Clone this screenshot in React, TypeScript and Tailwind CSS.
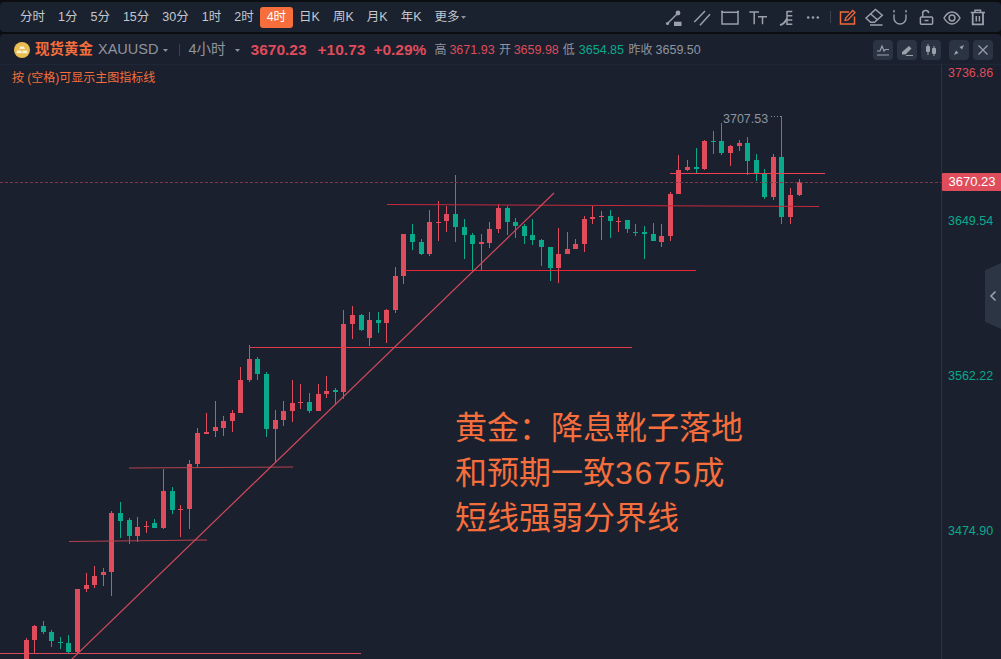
import React from "react";

const FONT = '"Liberation Sans", "Noto Sans CJK SC", sans-serif';
const RED = "#df4c5b";
const GREEN = "#0ba98c";

// x, high, bodyTop, bodyBottom, low, up?
type Candle = [number, number, number, number, number, 0 | 1];
const candles: Candle[] = [
  [26, 638, 640, 665, 665, 1],
  [34, 625, 626, 640, 653, 1],
  [43, 621, 626, 632, 634, 0],
  [51, 630, 632, 641, 647, 0],
  [60, 637, 642, 643, 649, 0],
  [68, 635, 643, 652, 653, 0],
  [77, 589, 589, 652, 654, 1],
  [86, 573, 585, 589, 592, 1],
  [94, 566, 576, 585, 588, 1],
  [103, 568, 572, 575, 586, 1],
  [111, 511, 513, 572, 596, 1],
  [120, 502, 513, 521, 538, 0],
  [129, 518, 520, 536, 544, 0],
  [137, 517, 527, 536, 542, 1],
  [146, 521, 526, 527, 533, 1],
  [154, 519, 523, 528, 528, 0],
  [163, 469, 491, 528, 529, 1],
  [172, 487, 491, 510, 514, 0],
  [180, 505, 509, 510, 537, 1],
  [189, 460, 464, 509, 529, 1],
  [197, 428, 433, 464, 467, 1],
  [206, 413, 432, 434, 434, 1],
  [215, 401, 427, 431, 437, 1],
  [223, 416, 421, 428, 436, 1],
  [232, 410, 413, 421, 432, 1],
  [240, 367, 380, 413, 413, 1],
  [249, 345, 359, 380, 382, 1],
  [257, 357, 359, 374, 380, 0],
  [266, 372, 374, 429, 437, 0],
  [275, 410, 420, 429, 463, 1],
  [283, 401, 411, 420, 426, 1],
  [292, 380, 403, 411, 422, 1],
  [300, 384, 402, 403, 409, 1],
  [309, 393, 402, 411, 413, 0],
  [318, 384, 394, 411, 411, 1],
  [326, 376, 391, 394, 398, 1],
  [335, 388, 390, 392, 405, 0],
  [343, 310, 324, 392, 399, 1],
  [352, 306, 315, 324, 339, 1],
  [361, 314, 315, 330, 331, 0],
  [369, 312, 320, 338, 346, 1],
  [378, 312, 320, 323, 333, 0],
  [386, 309, 310, 323, 343, 1],
  [395, 267, 276, 310, 313, 1],
  [403, 234, 234, 276, 284, 1],
  [412, 224, 234, 242, 250, 0],
  [421, 239, 242, 254, 255, 0],
  [429, 210, 222, 254, 256, 1],
  [438, 201, 222, 223, 241, 1],
  [446, 206, 214, 221, 232, 1],
  [455, 175, 214, 227, 242, 0],
  [464, 219, 227, 235, 259, 0],
  [472, 233, 235, 244, 272, 0],
  [481, 234, 242, 244, 270, 1],
  [489, 222, 229, 243, 248, 1],
  [498, 204, 208, 229, 233, 1],
  [507, 206, 208, 222, 235, 0],
  [515, 218, 222, 226, 238, 0],
  [524, 224, 226, 236, 244, 0],
  [532, 219, 235, 240, 245, 0],
  [541, 239, 240, 247, 266, 0],
  [550, 247, 247, 268, 281, 0],
  [558, 228, 254, 268, 283, 1],
  [567, 232, 249, 254, 254, 1],
  [575, 239, 244, 249, 249, 1],
  [584, 216, 219, 244, 252, 1],
  [592, 206, 217, 219, 224, 1],
  [601, 211, 216, 217, 240, 1],
  [610, 210, 216, 221, 238, 0],
  [618, 217, 221, 222, 232, 1],
  [627, 220, 220, 229, 233, 0],
  [635, 224, 232, 233, 236, 0],
  [644, 226, 232, 234, 259, 0],
  [653, 223, 234, 241, 241, 0],
  [661, 224, 236, 242, 247, 1],
  [670, 192, 194, 236, 241, 1],
  [678, 155, 170, 194, 194, 1],
  [687, 160, 167, 170, 171, 1],
  [696, 148, 167, 169, 174, 0],
  [704, 140, 141, 169, 170, 1],
  [713, 131, 141, 142, 154, 0],
  [721, 123, 141, 153, 155, 0],
  [730, 145, 146, 153, 166, 1],
  [739, 140, 143, 146, 151, 1],
  [747, 137, 143, 161, 175, 0],
  [756, 154, 160, 173, 181, 0],
  [764, 169, 173, 197, 199, 0],
  [773, 154, 157, 197, 200, 1],
  [781, 116, 157, 217, 224, 0],
  [790, 188, 195, 217, 224, 1],
  [799, 179, 182, 195, 196, 1],
];

// hand drawn support and resistance lines
const levels = [
  { x1: 0, y1: 653.5, x2: 361, y2: 653.5, c: "#d9475a" },
  { x1: 69, y1: 541.5, x2: 207, y2: 540, c: "#b8414f" },
  { x1: 129, y1: 468, x2: 293, y2: 467, c: "#b8414f" },
  { x1: 249, y1: 347.5, x2: 632, y2: 347.5, c: "#e03a4a" },
  { x1: 387, y1: 204.5, x2: 819, y2: 206.5, c: "#c42a3c" },
  { x1: 405, y1: 270.5, x2: 696, y2: 270.5, c: "#ea2535" },
  { x1: 670, y1: 173.5, x2: 825, y2: 173.5, c: "#ee4252" },
];

const tools = ["分时", "1分", "5分", "15分", "30分", "1时", "2时", "4时", "日K", "周K", "月K", "年K"];

function Caret({ className = "" }: { className?: string }) {
  return (
    <svg width="5" height="3" viewBox="0 0 5 3" className={className}>
      <path d="M0 0h5L2.5 3z" fill="#8a919c" />
    </svg>
  );
}

// toolbar drawing icons, all on a 20 x 20 grid
function ToolIcon({ children, color = "#9aa1ab" }: { children: React.ReactNode; color?: string }) {
  return (
    <svg width="20" height="20" viewBox="0 0 20 20" fill="none" stroke={color} strokeWidth="1.5">
      {children}
    </svg>
  );
}

function SmallBtn({ children }: { children: React.ReactNode }) {
  return (
    <div className="flex h-5 w-5 items-center justify-center rounded-[4px] bg-[#2b3442]">
      {children}
    </div>
  );
}

function TopBar() {
  return (
    <div className="flex h-[30px] items-center rounded-[4px] bg-[#1a212f] pl-[13.5px]">
      {tools.map((t) => (
        <button
          key={t}
          type="button"
          className={`h-[21px] rounded-[3px] px-[6.5px] text-[12.5px] leading-[21px] ${
            t === "4时" ? "bg-[#f56e3c] text-white" : "text-[#c4c8ce]"
          }`}
        >
          {t}
        </button>
      ))}
      <button type="button" className="flex items-center gap-[2px] pl-[6.5px] text-[12.5px] text-[#c4c8ce]">
        更多
        <Caret />
      </button>

      <div className="ml-auto flex items-center pr-[13px]">
        <div className="flex items-center gap-[8px]">
          <ToolIcon>
            <path d="M3 17 13 7" />
            <circle cx="14" cy="6" r="2.4" fill="#9aa1ab" stroke="none" />
            <circle cx="3.5" cy="16.5" r="1.6" fill="#9aa1ab" stroke="none" />
            <rect x="10" y="14.7" width="7.5" height="4.3" fill="#9aa1ab" stroke="none" />
          </ToolIcon>
          <ToolIcon>
            <path d="M2.3 15 13 4M8 18.3 18 7.3" />
          </ToolIcon>
          <ToolIcon>
            <rect x="2" y="5.3" width="16" height="11.7" />
            <path d="M1 4.5h2M17 4.5h2" />
          </ToolIcon>
          <ToolIcon>
            <path d="M1.3 5H11M6.2 5v12.3M10 9.7h9M14.5 9.7v7.6" />
          </ToolIcon>
          <ToolIcon>
            <path d="M11 4.5h5.3M11 8.7h5.3M11 12.9h5.3M11 17.2h5.3M11 4v14" />
            <path d="M4 18c3.5-.5 5.5-3.5 7-6.500" strokeWidth="1.8" />
          </ToolIcon>
          <ToolIcon>
            <circle cx="4.2" cy="10.5" r="1.3" fill="#9aa1ab" stroke="none" />
            <circle cx="9" cy="10.5" r="1.3" fill="#9aa1ab" stroke="none" />
            <circle cx="13.8" cy="10.5" r="1.3" fill="#9aa1ab" stroke="none" />
          </ToolIcon>
        </div>
        <div className="ml-[6px] mr-[7px] h-[12px] w-px bg-[#39414e]" />
        <div className="flex items-center gap-[6px]">
          <ToolIcon color="#f0693a">
            <path d="M11 5H2.500v12h14V9.500" />
            <path d="M7 13.500 7.700 11l7-7.500 2.300 2-7 7.500z" strokeWidth="1.3" />
          </ToolIcon>
          <ToolIcon>
            <path d="m2 11 9.500-8.500 6.800 5.800-7.800 7H6.500z" />
            <path d="m6.500 6.800 6.800 6M6 18h12.500" />
          </ToolIcon>
          <ToolIcon>
            <path d="M4 7.500V11a6 6 0 0 0 12 0V7.500" strokeWidth="1.4" />
            <path d="M4 3v2.500M16 3v2.500" strokeWidth="1.4" />
          </ToolIcon>
          <ToolIcon>
            <rect x="4.4" y="10" width="12.2" height="7.3" rx="1" />
            <path d="M6.700 10V7a3 3 0 0 1 6-.8" />
            <path d="M8.500 13.500h4" />
          </ToolIcon>
          <ToolIcon>
            <path d="M2 11c2.300-4 5-6 8-6s5.700 2 8 6c-2.300 4-5 6-8 6s-5.700-2-8-6z" />
            <circle cx="10" cy="11" r="2.9" />
          </ToolIcon>
          <ToolIcon>
            <path d="M2.700 5.500h14.300M7 5.500V3.200h5.600v2.300" />
            <path d="M4.700 6v11.300h10.300V6" strokeWidth="1.8" />
            <path d="M8.300 9v5.500M11.400 9v5.500" />
          </ToolIcon>
        </div>
      </div>
    </div>
  );
}

function Quote() {
  return (
    <div className="flex h-[31px] items-center whitespace-nowrap border-b border-[#1e2735] pl-[14px] pr-2 pt-[2px]">
      <svg width="16" height="16" viewBox="0 0 16 16">
        <circle cx="8" cy="8" r="8" fill="#e9bd50" />
        <path d="M6 4.500h4l.8 2.500H5.200zM3 8.500h4.300l.6 2.800H2.400zM8.700 8.500H13l.6 2.800H8.100z" fill="#f8efd5" />
      </svg>
      <span className="ml-[5px] text-[14.5px] font-bold text-[#f56e3c]">现货黄金</span>
      <span className="ml-[5px] text-[14.5px] text-[#8f95a0]">XAUUSD</span>
      <Caret className="ml-[5px]" />
      <div className="ml-[11px] h-[12px] w-px bg-[#3a4250]" />
      <span className="ml-[8px] text-[14.5px] text-[#8f95a0]">4小时</span>
      <Caret className="ml-[9px]" />
      <span className="ml-[11px] text-[15.5px] font-bold text-[#df4c5b]">3670.23</span>
      <span className="ml-[11px] text-[15.5px] font-bold text-[#df4c5b]">+10.73</span>
      <span className="ml-[8px] text-[15.5px] font-bold text-[#df4c5b]">+0.29%</span>
      <span className="ml-[8px] text-[12px] text-[#8f95a0]">高</span>
      <span className="ml-[3px] text-[12.5px] text-[#df4c5b]">3671.93</span>
      <span className="ml-[4.5px] text-[12px] text-[#8f95a0]">开</span>
      <span className="ml-[2.5px] text-[12.5px] text-[#df4c5b]">3659.98</span>
      <span className="ml-[4px] text-[12px] text-[#8f95a0]">低</span>
      <span className="ml-[4px] text-[12.5px] text-[#0ba98c]">3654.85</span>
      <span className="ml-[4.5px] text-[12px] text-[#8f95a0]">昨收</span>
      <span className="ml-[3px] text-[12.5px] text-[#8f95a0]">3659.50</span>
      <div className="ml-auto flex items-center gap-1">
        <SmallBtn>
          <svg width="14" height="14" viewBox="0 0 14 14" fill="none" stroke="#9aa1ab" strokeWidth="1.2">
            <path d="M1 8h3l2-5 2 5 1.500-1.500H13M1 12h12" />
          </svg>
        </SmallBtn>
        <SmallBtn>
          <svg width="14" height="14" viewBox="0 0 14 14" fill="#9aa1ab">
            <path d="m2 9 7-6 2.500 2.500-6 6H2zM6.500 12H13v1H5.500z" />
          </svg>
        </SmallBtn>
        <SmallBtn>
          <svg width="14" height="14" viewBox="0 0 14 14" fill="#9aa1ab">
            <rect x="2" y="3" width="4" height="6" rx="1" />
            <rect x="8" y="5" width="4" height="6" rx="1" />
            <path d="M3.500 1h1v11h-1zM9.500 3h1v10h-1z" />
          </svg>
        </SmallBtn>
        <div className="ml-1 flex gap-1">
          <SmallBtn>
            <svg width="14" height="14" viewBox="0 0 14 14" fill="#9aa1ab">
              <path d="M12 2 7.500 4l2.500 2.500zM2 12l4.500-2L4 7.500z" />
            </svg>
          </SmallBtn>
          <SmallBtn>
            <svg width="14" height="14" viewBox="0 0 14 14" fill="none" stroke="#9aa1ab" strokeWidth="1.2">
              <path d="m2.500 2.500 9 9M11.500 2.500l-9 9" />
            </svg>
          </SmallBtn>
        </div>
      </div>
    </div>
  );
}

function ChartSvg() {
  return (
    <svg className="absolute inset-0" width="941" height="594" viewBox="0 65 941 594">
      <g shapeRendering="crispEdges">
        {candles.map(([x, hi, top, bottom, lo, up]) => {
          const c = up ? RED : GREEN;
          return (
            <g key={x} fill={c}>
              <rect x={x} y={hi} width="1" height={lo - hi} />
              <rect x={x - 2} y={top} width="5" height={Math.max(bottom - top, 1)} />
            </g>
          );
        })}
      </g>
      {levels.map((l) => (
        <line key={l.y1} x1={l.x1} y1={l.y1} x2={l.x2} y2={l.y2} stroke={l.c} strokeWidth="1.1" />
      ))}
      <line x1="71" y1="660" x2="554" y2="193" stroke="#d2495b" strokeWidth="1.2" />
      <line x1="0" y1="182.5" x2="941" y2="182.5" stroke="#7d3a48" strokeDasharray="3 2" />
      <path d="M771 116.500h10" stroke="#8f95a0" strokeDasharray="1 2" />
    </svg>
  );
}

export default function App() {
  return (
    <div
      className="flex h-[659px] w-[1001px] flex-col gap-[2px] overflow-hidden bg-[#0c0d10] pt-[2px] text-[#c4c8ce]"
      style={{ fontFamily: FONT }}
    >
      <TopBar />
      <div className="flex min-h-0 flex-1 flex-col rounded-t-[4px] bg-[#1a202e]">
        <Quote />
        <div className="flex min-h-0 flex-1">
          <div className="relative w-[941px]">
            <ChartSvg />
            <div className="relative pl-3 pt-[5px] text-[12px] leading-[17px] text-[#f56e3c]">
              按 (空格)可显示主图指标线
            </div>
            <span className="absolute left-[723px] top-[45px] text-[12.5px] text-[#8f95a0]">3707.53</span>
            <div className="absolute left-[455px] top-[341px] text-[32px] leading-[45px] text-[#f56e3c]">
              <div>黄金：降息靴子落地</div>
              <div>
                和预期一致<span className="tracking-[1.6px]">3675</span>成
              </div>
              <div>短线强弱分界线</div>
            </div>
          </div>
          <div className="relative flex-1 border-l border-[#2a3340] pl-[6px] text-[12.5px] text-[#0ba98c]">
            <div className="-mt-[1px] h-[147px] text-[#df4c5b]">3736.86</div>
            <div className="h-[155px] pt-[1px]">3649.54</div>
            <div className="h-[155px] pt-[1px]">3562.22</div>
            <div className="pt-[1px]">3474.90</div>
            <div className="absolute left-0 top-[108px] flex h-[18px] w-[60px] items-center justify-center rounded-l-[1px] bg-[#df4c5b] text-[13px] text-white">
              3670.23
            </div>
            <div className="absolute right-0 top-[198px] flex h-[66px] w-[16px] items-center justify-center bg-[#2c3543] [clip-path:polygon(0_11%,100%_0,100%_100%,0_89%)]">
              <svg width="8" height="12" viewBox="0 0 8 12" fill="none" stroke="#9aa1ab" strokeWidth="1.6">
                <path d="M6.500 1.500 2 6l4.500 4.500" />
              </svg>
            </div>
          </div>
        </div>
      </div>
    </div>
  );
}
